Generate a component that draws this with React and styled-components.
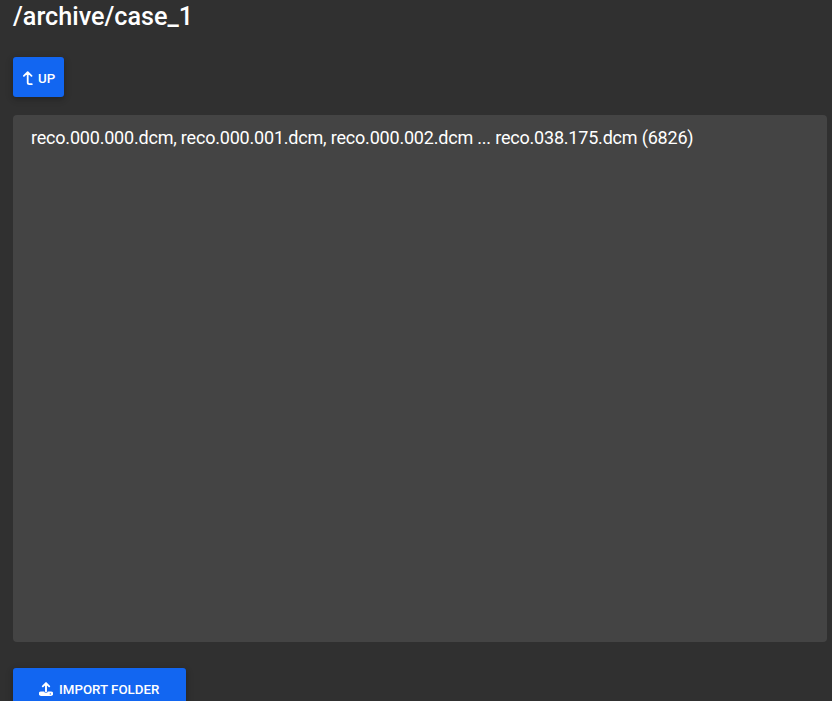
import React from 'react';
import styled, { createGlobalStyle } from 'styled-components';

const GlobalStyle = createGlobalStyle`
  * { box-sizing: border-box; }
  body { margin: 0; background: #303030; overflow: hidden; }
`;

const Page = styled.main`
  height: 701px;
  padding: 0 5px 0 13px;
  overflow: hidden;
  display: flex;
  flex-direction: column;
  align-items: flex-start;
  background: #303030;
  color: #fff;
  font-family: Roboto, sans-serif;
`;

const Title = styled.h1`
  margin: 0 0 24px;
  height: 33px;
  font-size: 25.2px;
  line-height: 34px;
  font-weight: 500;
  white-space: nowrap;
`;

const Button = styled.button`
  flex: none;
  display: flex;
  align-items: center;
  justify-content: flex-start;
  gap: ${({ $gap }) => $gap}px;
  width: ${({ $width }) => $width}px;
  height: 40px;
  padding: 3px 0 0 ${({ $inset }) => $inset}px;
  border: 0;
  border-radius: 3px;
  background: #1266f1;
  color: #fff;
  font: 500 13.3px/21px Roboto, sans-serif;
  text-transform: uppercase;
  white-space: nowrap;
  box-shadow: 0 2px 5px rgba(0, 0, 0, 0.2), 0 2px 10px rgba(0, 0, 0, 0.1);

  svg { flex: none; margin-bottom: 1px; }
`;

const FileList = styled.ul`
  flex: none;
  align-self: stretch;
  height: 527px;
  margin: 18px 0 26px;
  padding: 12px 18px;
  list-style: none;
  border-radius: 4px;
  background: #444;
`;

const FileEntry = styled.li`
  font-size: 18px;
  line-height: 22px;
  letter-spacing: -0.2px;
  white-space: nowrap;
`;

const UpIcon = () => (
  <svg width="10" height="15" viewBox="0 0 10 15" fill="none" stroke="#fff" strokeWidth="1.8" strokeLinecap="round" strokeLinejoin="round">
    <path d="M.9 4.9 4.7 1.2 8.5 4.9M4.7 1.5V11.6Q4.7 13.2 6.4 13.2H8.8" />
  </svg>
);

const UploadIcon = () => (
  <svg width="14" height="14" viewBox="0 0 14 14">
    <path
      fill="#fff"
      fillRule="evenodd"
      d="M2 9.5H5.2Q5.4 10.9 7 10.9T8.8 9.5H12A2.2 2.2 0 0 1 12 13.9H2A2.2 2.2 0 0 1 2 9.5ZM11.3 11.3A.65.65 0 1 0 11.3 12.6.65.65 0 1 0 11.3 11.3Z"
    />
    <path d="M3.8 4.3 7 1.1l3.2 3.2M7 1.5V9.6" fill="none" stroke="#fff" strokeWidth="1.9" strokeLinecap="round" strokeLinejoin="round" />
  </svg>
);

export default function App() {
  return (
    <>
      <GlobalStyle />
      <Page>
        <Title>/archive/case_1</Title>
        <Button $width={51} $inset={10} $gap={5}><UpIcon />Up</Button>
        <FileList>
          <FileEntry>reco.000.000.dcm, reco.000.001.dcm, reco.000.002.dcm ... reco.038.175.dcm (6826)</FileEntry>
        </FileList>
        <Button $width={173} $inset={26} $gap={6}><UploadIcon />Import folder</Button>
      </Page>
    </>
  );
}
